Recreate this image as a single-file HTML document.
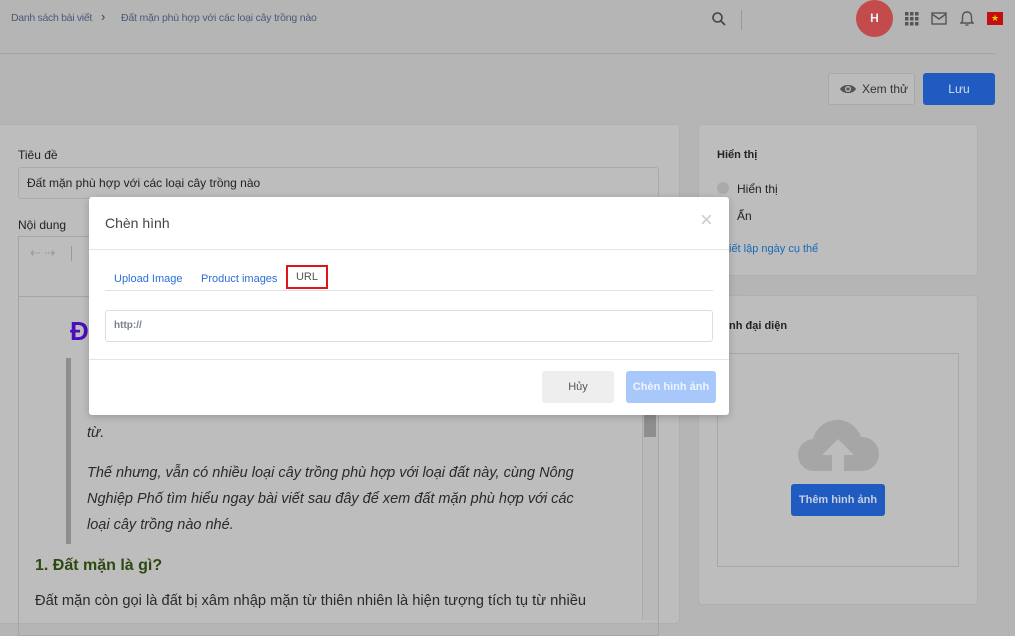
<!DOCTYPE html>
<html><head><meta charset="utf-8"><style>
*{box-sizing:border-box;margin:0;padding:0}
body{width:1015px;height:613px;overflow:hidden;background:#b5b5b5;font-family:"Liberation Sans",Arial,sans-serif;position:relative;color:#222}
.abs{position:absolute}
.card{position:absolute;background:#bdbdbd;border:1px solid #b0b0b0;border-radius:4px}
.i{font-family:"Liberation Sans",sans-serif;font-style:italic;font-size:14.5px;color:#2a2a2a}
</style></head><body>
<div class="abs" style="left:11px;top:12px;font-size:10.5px;letter-spacing:-0.3px;color:#4a5a78">Danh sách bài viết</div>
<div class="abs" style="left:101px;top:9px;font-size:13px;color:#444">›</div>
<div class="abs" style="left:121px;top:12px;font-size:10.5px;letter-spacing:-0.2px;color:#4a5a78">Đất mặn phù hợp với các loại cây trồng nào</div>
<svg class="abs" style="left:711px;top:11px" width="16" height="16" viewBox="0 0 16 16"><circle cx="6.5" cy="6.5" r="4.5" fill="none" stroke="#444" stroke-width="1.6"/><path d="M10 10l4 4" stroke="#444" stroke-width="1.8"/></svg>
<div class="abs" style="left:741px;top:10px;width:1px;height:20px;background:#999"></div>
<div class="abs" style="left:856px;top:0;width:37px;height:37px;border-radius:50%;background:#c44b4b;color:#eee;font-size:12px;font-weight:bold;text-align:center;line-height:37px">H</div>
<svg class="abs" style="left:905px;top:12px" width="14" height="14"><g fill="#555"><rect x="0" y="0" width="3.5" height="3.5"/><rect x="5" y="0" width="3.5" height="3.5"/><rect x="10" y="0" width="3.5" height="3.5"/><rect x="0" y="5" width="3.5" height="3.5"/><rect x="5" y="5" width="3.5" height="3.5"/><rect x="10" y="5" width="3.5" height="3.5"/><rect x="0" y="10" width="3.5" height="3.5"/><rect x="5" y="10" width="3.5" height="3.5"/><rect x="10" y="10" width="3.5" height="3.5"/></g></svg>
<svg class="abs" style="left:931px;top:12px" width="16" height="13"><rect x="1" y="1" width="14" height="11" fill="none" stroke="#555" stroke-width="1.4"/><path d="M1 2l7 5 7-5" fill="none" stroke="#555" stroke-width="1.4"/></svg>
<svg class="abs" style="left:960px;top:10px" width="14" height="17"><path d="M7 2c-3 0-4.5 2-4.5 5v4L1 13h12l-1.5-2V7c0-3-1.5-5-4.5-5z" fill="none" stroke="#555" stroke-width="1.4"/><path d="M5.5 15h3" stroke="#555" stroke-width="1.4"/></svg>
<div class="abs" style="left:987px;top:12px;width:16px;height:13px;background:#c50f0f;color:#e8d000;font-size:9px;text-align:center;line-height:13px">★</div>
<div class="abs" style="left:0;top:53px;width:995px;height:1px;background:#a5a5a5"></div>
<div class="abs" style="left:828px;top:73px;width:87px;height:32px;border:1px solid #a8a8a8;border-radius:3px;background:#bbb;font-size:12px;color:#333;line-height:30px;padding-left:33px">Xem thử</div>
<svg class="abs" style="left:839px;top:82px" width="18" height="14" viewBox="0 0 18 14"><path d="M1 7C4 1.5 14 1.5 17 7 14 12.5 4 12.5 1 7z" fill="#555"/><circle cx="9" cy="7" r="3" fill="#bbb"/><circle cx="9" cy="7" r="1.6" fill="#555"/></svg>
<div class="abs" style="left:923px;top:73px;width:72px;height:32px;border-radius:3px;background:#1f5bc1;color:#d8dde8;font-size:12px;text-align:center;line-height:32px">Lưu</div>

<div class="card" style="left:-4px;top:124px;width:684px;height:500px"></div>
<div class="abs" style="left:18px;top:148px;font-size:12px">Tiêu đề</div>
<div class="abs" style="left:18px;top:167px;width:641px;height:32px;border:1px solid #ababab;border-radius:3px;font-size:12px;line-height:30px;padding-left:8px">Đất mặn phù hợp với các loại cây trồng nào</div>
<div class="abs" style="left:18px;top:218px;font-size:12px">Nội dung</div>
<div class="abs" style="left:18px;top:236px;width:641px;height:400px;border:1px solid #a5a5a5"></div>
<div class="abs" style="left:19px;top:296px;width:639px;height:1px;background:#a5a5a5"></div>
<div class="abs" style="left:30px;top:245px;font-size:13px;color:#999">⇠ ⇢</div>
<div class="abs" style="left:71px;top:246px;width:1px;height:15px;background:#999"></div>
<div class="abs" style="left:642px;top:300px;width:16px;height:320px;background:#b9b9b9;border-left:1px solid #aaa"></div>
<div class="abs" style="left:644px;top:415px;width:12px;height:22px;background:#8e8e8e"></div>
<div class="abs" style="left:70px;top:316px;font-size:26px;font-weight:bold;color:#4b0dbd">Đ</div>
<div class="abs" style="left:66px;top:358px;width:5px;height:186px;background:#8e8e8e"></div>
<div class="abs i" style="left:87px;top:425px">từ.</div>
<div class="abs i" style="left:87px;top:460px;line-height:26px;white-space:nowrap">Thế nhưng, vẫn có nhiều loại cây trồng phù hợp với loại đất này, cùng Nông<br>Nghiệp Phố tìm hiểu ngay bài viết sau đây để xem đất mặn phù hợp với các<br>loại cây trồng nào nhé.</div>
<div class="abs" style="left:35px;top:557px;font-size:16px;font-weight:bold;color:#2c4a10">1. Đất mặn là gì?</div>
<div class="abs" style="left:35px;top:593px;font-size:14.7px;color:#2a2a2a;white-space:nowrap">Đất mặn còn gọi là đất bị xâm nhập mặn từ thiên nhiên là hiện tượng tích tụ từ nhiều</div>

<div class="card" style="left:698px;top:124px;width:280px;height:152px"></div>
<div class="abs" style="left:717px;top:149px;font-size:11px;font-weight:bold">Hiển thị</div>
<div class="abs" style="left:717px;top:182px;width:12px;height:12px;border-radius:50%;background:#aaa"></div>
<div class="abs" style="left:737px;top:182px;font-size:12px">Hiển thị</div>
<div class="abs" style="left:737px;top:209px;font-size:12px">Ẩn</div>
<div class="abs" style="left:729px;top:243px;font-size:11px;color:#1768b8">iết lập ngày cụ thể</div>
<div class="card" style="left:698px;top:295px;width:280px;height:310px"></div>
<div class="abs" style="left:729px;top:320px;font-size:11px;font-weight:bold">nh đại diện</div>
<div class="abs" style="left:717px;top:353px;width:242px;height:214px;border:1px solid #a8a8a8"></div>
<svg class="abs" style="left:797px;top:417px" width="82" height="55" viewBox="0 0 82 55"><path d="M18 54a16 16 0 0 1-2-32 25 25 0 0 1 48-2 17 17 0 0 1 2 34H47V38h10L41 22 25 38h10v16z" fill="#a6a6a6"/></svg>
<div class="abs" style="left:791px;top:484px;width:94px;height:32px;border-radius:3px;background:#1f5bc1;color:#c8cfdf;font-size:11px;font-weight:bold;text-align:center;line-height:32px">Thêm hình ảnh</div>

<div class="abs" style="left:89px;top:197px;width:640px;height:218px;background:#fff;border-radius:3px;box-shadow:0 2px 8px rgba(0,0,0,.2)">
 <div class="abs" style="left:16px;top:18px;font-size:14px;color:#444">Chèn hình</div>
 <div class="abs" style="left:611px;top:10px;font-size:22px;color:#ccc;font-weight:200">×</div>
 <div class="abs" style="left:0;top:52px;width:640px;height:1px;background:#e5e5e5"></div>
 <div class="abs" style="left:25px;top:76px;font-size:11px;color:#2b6fd6">Upload Image</div>
 <div class="abs" style="left:112px;top:76px;font-size:11px;color:#2b6fd6">Product images</div>
 <div class="abs" style="left:16px;top:93px;width:608px;height:1px;background:#e0e0e8"></div>
 <div class="abs" style="left:197px;top:68px;width:42px;height:24px;border:2px solid #e0141c;background:#fff;font-size:11px;color:#555;text-align:center;line-height:20px">URL</div>
 <div class="abs" style="left:16px;top:113px;width:608px;height:32px;border:1px solid #ddd;border-radius:3px;font-size:10px;font-weight:bold;color:#7a8090;line-height:30px;padding-left:8px">http://</div>
 <div class="abs" style="left:0;top:162px;width:640px;height:1px;background:#e5e5e5"></div>
 <div class="abs" style="left:453px;top:174px;width:72px;height:32px;border-radius:3px;background:#eee;font-size:11px;color:#555;text-align:center;line-height:32px">Hủy</div>
 <div class="abs" style="left:537px;top:174px;width:90px;height:32px;border-radius:3px;background:#a8c8fb;font-size:11px;font-weight:bold;color:#eef4ff;text-align:center;line-height:32px">Chèn hình ảnh</div>
</div>
</body></html>
